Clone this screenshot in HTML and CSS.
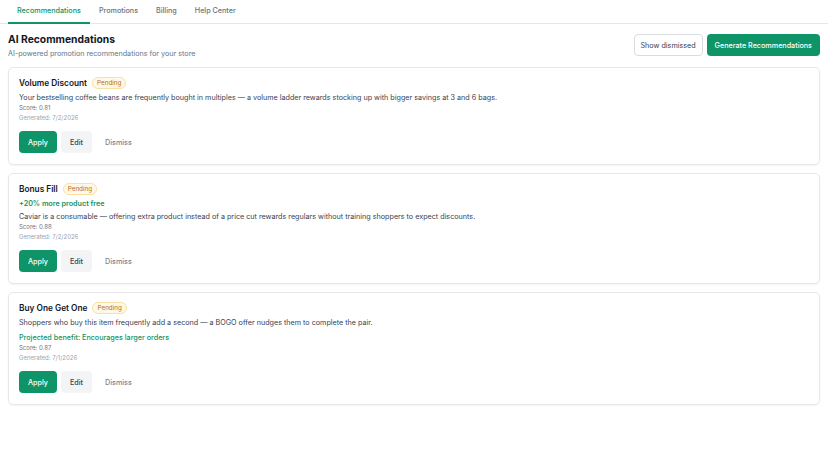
FILE: index.html
```html
<!DOCTYPE html>
<html>
<head>
  <title>AI Recommendations</title>
  <link rel="stylesheet" href="styles.css">
</head>
<body>
  <nav class="tabs">
    <a class="tab active">Recommendations</a>
    <a class="tab">Promotions</a>
    <a class="tab">Billing</a>
    <a class="tab">Help Center</a>
  </nav>

  <div class="page">
    <div class="header">
      <div>
        <h1>AI Recommendations</h1>
        <p class="subtitle">AI-powered promotion recommendations for your store</p>
      </div>
      <div class="header-actions">
        <button class="btn btn-outline">Show dismissed</button>
        <button class="btn btn-primary">Generate Recommendations</button>
      </div>
    </div>

    <div class="card">
      <div class="card-title">
        <h2>Volume Discount</h2>
        <span class="badge">Pending</span>
      </div>
      <p class="desc">Your bestselling coffee beans are frequently bought in multiples — a volume ladder rewards stocking up with bigger savings at 3 and 6 bags.</p>
      <p class="score">Score: 0.81</p>
      <p class="date">Generated: 7/2/2026</p>
      <div class="actions">
        <button class="btn btn-primary">Apply</button>
        <button class="btn btn-grey">Edit</button>
        <button class="btn btn-ghost">Dismiss</button>
      </div>
    </div>

    <div class="card">
      <div class="card-title">
        <h2>Bonus Fill</h2>
        <span class="badge">Pending</span>
      </div>
      <p class="highlight">+20% more product free</p>
      <p class="desc">Caviar is a consumable — offering extra product instead of a price cut rewards regulars without training shoppers to expect discounts.</p>
      <p class="score">Score: 0.88</p>
      <p class="date">Generated: 7/2/2026</p>
      <div class="actions">
        <button class="btn btn-primary">Apply</button>
        <button class="btn btn-grey">Edit</button>
        <button class="btn btn-ghost">Dismiss</button>
      </div>
    </div>

    <div class="card">
      <div class="card-title">
        <h2>Buy One Get One</h2>
        <span class="badge">Pending</span>
      </div>
      <p class="desc">Shoppers who buy this item frequently add a second — a BOGO offer nudges them to complete the pair.</p>
      <p class="benefit">Projected benefit: Encourages larger orders</p>
      <p class="score">Score: 0.87</p>
      <p class="date">Generated: 7/1/2026</p>
      <div class="actions">
        <button class="btn btn-primary">Apply</button>
        <button class="btn btn-grey">Edit</button>
        <button class="btn btn-ghost">Dismiss</button>
      </div>
    </div>
  </div>
</body>
</html>
```

FILE: styles.css
```css
body {
  margin: 0;
  font-family: Inter, "Noto Sans", sans-serif;
  color: #111827;
  background-color: #ffffff;
}

p {
  margin: 0;
}

.tabs {
  display: flex;
  padding: 0 8px;
  border-bottom: 1px solid #e5e7eb;
}

.tab {
  padding: 6px 9px 6px 9px;
  font-size: 7.2px;
  line-height: 10px;
  font-weight: 500;
  color: #6b7280;
  border-bottom: 2px solid transparent;
  margin-bottom: -1px;
}

.tab.active {
  color: #0e9466;
  border-bottom-color: #0e9466;
}

.page {
  padding: 10px 8px;
}

.header {
  display: flex;
  justify-content: space-between;
  align-items: flex-start;
  margin-bottom: 8px;
}

h1 {
  margin: 0;
  font-size: 10.3px;
  line-height: 11px;
  font-weight: 700;
}

.subtitle {
  margin-top: 4px;
  font-size: 7.2px;
  line-height: 10px;
  color: #64748b;
}

.header-actions {
  display: flex;
  gap: 4px;
}

.btn {
  font-family: inherit;
  font-size: 7.2px;
  font-weight: 500;
  height: 22px;
  padding: 0 8px;
  border-radius: 4px;
  border: none;
  cursor: pointer;
}

.btn-outline {
  background-color: #ffffff;
  border: 1px solid #d9dce1;
  color: #374151;
  font-weight: 400;
  padding: 0 6px;
}

.btn-primary {
  background-color: #0e9466;
  color: #ffffff;
}

.btn-grey {
  background-color: #f3f4f6;
  color: #374151;
}

.btn-ghost {
  background-color: transparent;
  color: #6b7280;
}

.card {
  border: 1px solid #e5e7eb;
  border-radius: 5px;
  padding: 8px 10px 11px;
  margin-bottom: 8px;
  box-shadow: 0 1px 2px rgba(0, 0, 0, 0.05);
}

.card-title {
  display: flex;
  align-items: center;
  gap: 5px;
  height: 14px;
}

h2 {
  margin: 0;
  font-size: 8.3px;
  font-weight: 600;
}

.badge {
  font-size: 6.3px;
  line-height: 10px;
  padding: 0 4px;
  border-radius: 8px;
  background-color: #fef9e7;
  border: 1px solid #f8e1a4;
  color: #c2690b;
}

.desc {
  margin-top: 2px;
  font-size: 7.2px;
  line-height: 11px;
  color: #374151;
}

.highlight {
  margin-top: 2px;
  font-size: 7.2px;
  line-height: 11px;
  font-weight: 600;
  color: #0e9466;
}

.benefit {
  margin-top: 4px;
  font-size: 7.2px;
  line-height: 11px;
  font-weight: 500;
  color: #0e9466;
}

.score {
  font-size: 6px;
  line-height: 10px;
  color: #6b7280;
}

.date {
  font-size: 6px;
  line-height: 10px;
  color: #9ca3af;
}

.actions {
  display: flex;
  gap: 4px;
  margin-top: 8px;
}

.actions .btn {
  padding: 0 9px;
}

.actions .btn-ghost {
  color: #7b8494;
}
```
